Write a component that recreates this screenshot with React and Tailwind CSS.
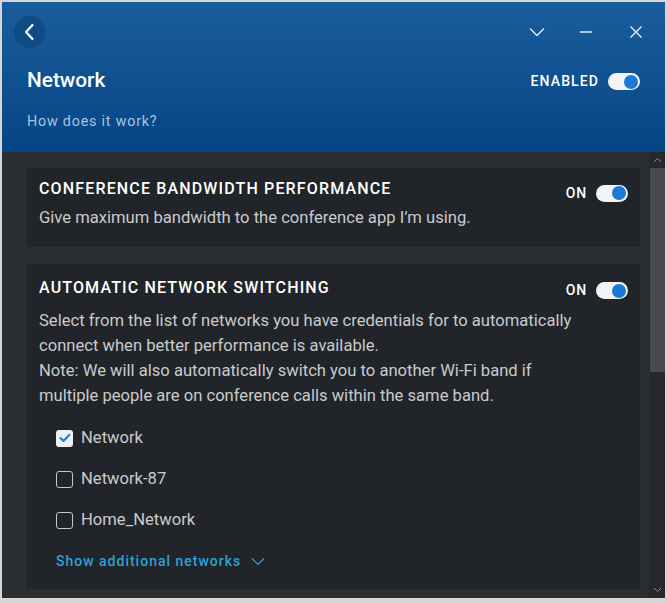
import React from "react";

function Toggle() {
  return (
    <div className="relative w-[32px] h-[17px] rounded-full bg-[#f2f4f6] shrink-0">
      <div className="absolute right-[2px] top-[1.5px] w-[14px] h-[14px] rounded-full bg-[#1b78d6]" />
    </div>
  );
}

function Checkbox({ checked }) {
  if (checked) {
    return (
      <div className="w-[17px] h-[17px] rounded-[3px] bg-[#eef1f4] flex items-center justify-center shrink-0">
        <svg width="12" height="10" viewBox="0 0 12 10">
          <path d="M1.5 5 L4.5 8 L10.5 1.8" fill="none" stroke="#1b78d6" strokeWidth="2" strokeLinecap="round" strokeLinejoin="round" />
        </svg>
      </div>
    );
  }
  return <div className="w-[17px] h-[17px] rounded-[3px] border-[1.5px] border-[#c4c6c8] shrink-0" />;
}

function OnToggle({ mt }) {
  return (
    <div className={`flex items-center gap-[9px] h-[17px] ${mt}`}>
      <span className="text-[14px] font-medium tracking-[0.8px] text-white leading-[17px]">ON</span>
      <Toggle />
    </div>
  );
}

export default function App() {
  return (
    <div
      className="w-[667px] h-[603px] bg-[#d6d6d6] pt-[2px] px-[2px] pb-[5px]"
      style={{ fontFamily: "Roboto, 'Noto Sans', sans-serif" }}
    >
      <div className="w-full h-full flex flex-col overflow-hidden">
        {/* Header */}
        <div className="h-[150px] shrink-0 bg-gradient-to-b from-[#1a5d9d] to-[#064585] px-[25px] pt-[14px] text-white">
          <div className="flex items-center justify-between h-[32px]">
            <div className="w-[32px] h-[32px] -ml-[13px] rounded-full bg-[#0f4c86] flex items-center justify-center">
              <svg width="16" height="18" viewBox="0 0 16 18">
                <path d="M10.5 2 L4 9 L10.5 16" fill="none" stroke="white" strokeWidth="2.2" strokeLinecap="round" strokeLinejoin="round" />
              </svg>
            </div>
            <div className="flex items-center mr-[-3px]">
              <svg width="16" height="10" viewBox="0 0 16 10">
                <path d="M1 1.5 L8 8.5 L15 1.5" fill="none" stroke="#e6eef7" strokeWidth="1.3" />
              </svg>
              <svg width="14" height="4" viewBox="0 0 14 4" className="ml-[34px]">
                <path d="M1 2 L13 2" fill="none" stroke="#e6eef7" strokeWidth="1.5" />
              </svg>
              <svg width="14" height="14" viewBox="0 0 14 14" className="ml-[36px]">
                <path d="M1.5 1.5 L12.5 12.5 M12.5 1.5 L1.5 12.5" fill="none" stroke="#e6eef7" strokeWidth="1.4" />
              </svg>
            </div>
          </div>
          <div className="flex items-center justify-between mt-[18px]">
            <div className="text-[20.8px] font-medium leading-[28px]">Network</div>
            <div className="flex items-center gap-[9px] mt-[3px]">
              <span className="text-[14px] font-medium tracking-[1.1px]">ENABLED</span>
              <Toggle />
            </div>
          </div>
          <div className="mt-[17px] text-[14.3px] tracking-[0.8px] text-[#a9c3df] leading-[20px]">How does it work?</div>
        </div>

        {/* Content */}
        <div className="flex-1 flex bg-[#2a2e32] min-h-0">
          <div className="flex-1 pl-[25px] pr-[9px] pt-[16px] flex flex-col gap-[17px] overflow-hidden">
            <div className="bg-[#212428] rounded-[2px] pl-[12px] pr-[12px] pt-[9px] pb-[17px] shrink-0">
              <div className="flex items-start justify-between">
                <div className="text-[16px] font-medium tracking-[1.15px] text-white leading-[24px]">CONFERENCE BANDWIDTH PERFORMANCE</div>
                <OnToggle mt="mt-[7.5px]" />
              </div>
              <div className="text-[16.6px] text-[#c9cbcd] leading-[24px] mt-[4px]">Give maximum bandwidth to the conference app I’m using.</div>
            </div>

            <div className="bg-[#212428] rounded-[2px] px-[12px] pt-[12px] pb-[15px] shrink-0">
              <div className="flex items-start justify-between">
                <div className="text-[16px] font-medium tracking-[1.15px] text-white leading-[24px]">AUTOMATIC NETWORK SWITCHING</div>
                <OnToggle mt="mt-[6.5px]" />
              </div>
              <div className="text-[16.6px] text-[#c9cbcd] leading-[25px] mt-[8.5px] whitespace-nowrap">
                Select from the list of networks you have credentials for to automatically
                <br />
                connect when better performance is available.
                <br />
                Note: We will also automatically switch you to another Wi-Fi band if
                <br />
                multiple people are on conference calls within the same band.
              </div>
              <div className="pl-[17px] mt-[18px] flex flex-col gap-[17.2px]">
                <div className="flex items-center gap-[8px] h-[24px]">
                  <Checkbox checked />
                  <span className="text-[16.6px] text-[#c9cbcd]">Network</span>
                </div>
                <div className="flex items-center gap-[8px] h-[24px]">
                  <Checkbox />
                  <span className="text-[16.6px] text-[#c9cbcd]">Network-87</span>
                </div>
                <div className="flex items-center gap-[8px] h-[24px]">
                  <Checkbox />
                  <span className="text-[16.6px] text-[#c9cbcd]">Home_Network</span>
                </div>
                <div className="flex items-center gap-[10px] h-[24px]">
                  <span className="text-[14px] font-medium tracking-[1px] text-[#2aa3d9]">Show additional networks</span>
                  <svg width="14" height="9" viewBox="0 0 14 9">
                    <path d="M1 1.5 L7 7.5 L13 1.5" fill="none" stroke="#2aa3d9" strokeWidth="1.2" />
                  </svg>
                </div>
              </div>
            </div>
          </div>

          {/* Scrollbar */}
          <div className="w-[16px] shrink-0 bg-[#25292d] flex flex-col items-center">
            <div className="h-[16px] flex items-center justify-center">
              <svg width="9" height="6" viewBox="0 0 9 6">
                <path d="M1 5 L4.5 1.5 L8 5" fill="none" stroke="#8a8d90" strokeWidth="1" />
              </svg>
            </div>
            <div className="w-[15px] h-[204px] bg-[#474b4f]" />
            <div className="flex-1" />
            <div className="h-[16px] flex items-center justify-center">
              <svg width="9" height="6" viewBox="0 0 9 6">
                <path d="M1 1 L4.5 4.5 L8 1" fill="none" stroke="#8a8d90" strokeWidth="1" />
              </svg>
            </div>
          </div>
        </div>
      </div>
    </div>
  );
}
